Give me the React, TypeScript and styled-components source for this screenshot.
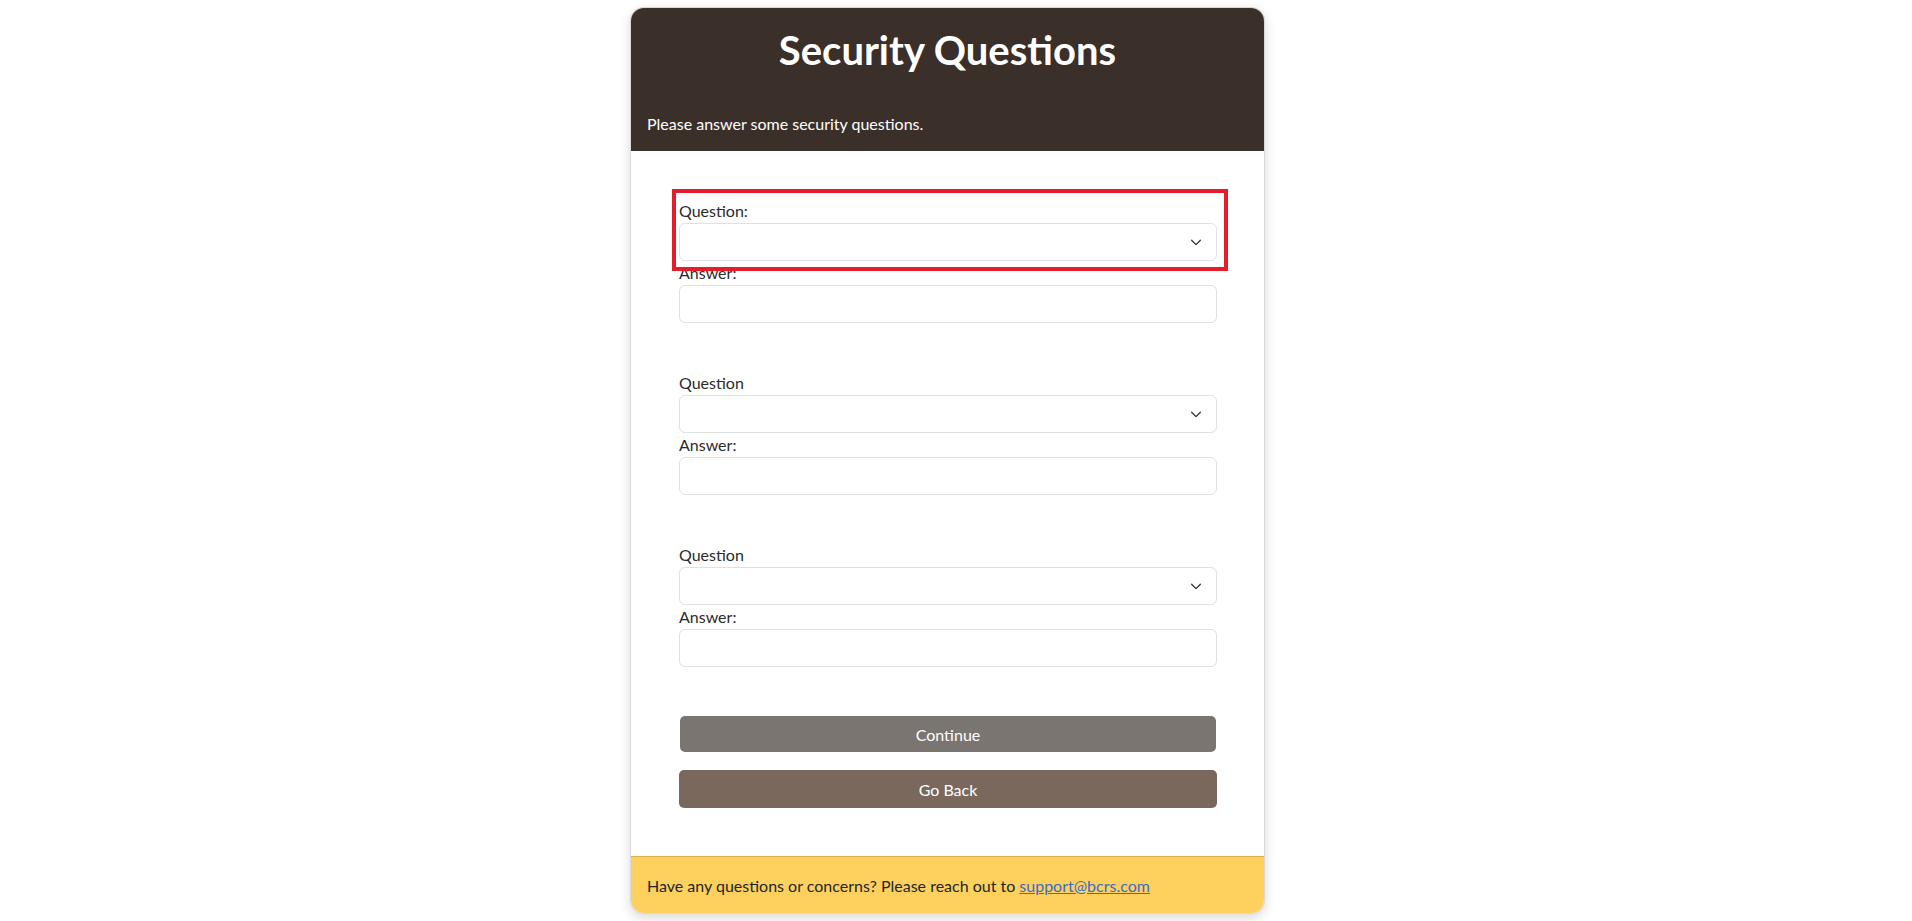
import React from 'react';
import styled, { createGlobalStyle } from 'styled-components';

const GlobalStyle = createGlobalStyle`
  html, body {
    margin: 0;
    padding: 0;
    background: #ffffff;
  }
  body {
    font-family: Lato, "Noto Sans", "Liberation Sans", sans-serif;
    font-size: 16px;
    color: #212529;
  }
  * {
    box-sizing: border-box;
  }
`;

// right padding stands in for the browser scrollbar seen in the reference
const Page = styled.div`
  display: flex;
  justify-content: center;
  padding: 7px 17px 78px 0;
`;

const Card = styled.div`
  width: 635px;
  background: #ffffff;
  border: 1px solid rgba(0, 0, 0, 0.15);
  border-radius: 14px;
  overflow: hidden;
  box-shadow: 0 4px 12px rgba(0, 0, 0, 0.15);
  display: flex;
  flex-direction: column;
`;

const Header = styled.div`
  background: #3b2f2a;
  color: #ffffff;
  padding: 18px 16px 15px;
  display: flex;
  flex-direction: column;
  gap: 38px;
`;

const Title = styled.h1`
  margin: 0;
  text-align: center;
  font-size: 40px;
  font-weight: 700;
  line-height: 48px;
`;

const Subtitle = styled.p`
  margin: 0;
  font-size: 16px;
  line-height: 24px;
`;

const Body = styled.form`
  padding: 48px 47px 48px 48px;
  display: flex;
  flex-direction: column;
  gap: 48px;
`;

const Group = styled.div`
  display: flex;
  flex-direction: column;
`;

const Field = styled.div<{ $highlight?: boolean }>`
  position: relative;
  display: flex;
  flex-direction: column;

  ${({ $highlight }) =>
    $highlight &&
    `
    &::after {
      content: '';
      position: absolute;
      top: -10px;
      bottom: -10px;
      left: -7px;
      right: -11px;
      border: 4px solid #e31e2a;
      pointer-events: none;
      z-index: 2;
    }
  `}
`;

const Label = styled.label`
  font-size: 16px;
  line-height: 24px;
  color: #2b2b2b;
`;

const Select = styled.div`
  position: relative;
  height: 38px;
  border: 1px solid #dee2e6;
  border-radius: 6px;
  background: #ffffff;
  display: flex;
  align-items: center;
  justify-content: flex-end;
  padding-right: 13px;
  color: #343a40;
`;

const Input = styled.input`
  height: 38px;
  width: 100%;
  border: 1px solid #dee2e6;
  border-radius: 6px;
  padding: 6px 12px;
  font: inherit;
  background: #ffffff;
  outline: none;
`;

const Buttons = styled.div`
  display: flex;
  flex-direction: column;
  gap: 18px;
  margin-top: 1px;
`;

const Button = styled.button<{ $tone: 'muted' | 'brown' }>`
  height: ${({ $tone }) => ($tone === 'muted' ? '36px' : '38px')};
  margin: ${({ $tone }) => ($tone === 'muted' ? '0 1px' : '0')};
  border: none;
  border-radius: 5px;
  background: ${({ $tone }) => ($tone === 'muted' ? '#7b7572' : '#7b685d')};
  color: #ffffff;
  font-family: inherit;
  font-size: 16px;
  cursor: pointer;
`;

const Footer = styled.div`
  background: #fed15f;
  border-top: 1px solid #d9b24a;
  height: 57px;
  padding: 0 16px;
  display: flex;
  align-items: center;
  font-size: 16px;
  color: #212529;
`;

const Link = styled.a`
  color: #3b6bc6;
  text-decoration: underline;
  margin-left: 4px;
`;

const Chevron = () => (
  <svg width="14" height="14" viewBox="0 0 16 16" fill="none">
    <path d="m3 6 5 5 5-5" stroke="#343a40" strokeWidth="1.6" strokeLinecap="round" strokeLinejoin="round" />
  </svg>
);

const questions = [
  { label: 'Question:', highlight: true },
  { label: 'Question', highlight: false },
  { label: 'Question', highlight: false },
];

export default function App() {
  return (
    <>
      <GlobalStyle />
      <Page>
        <Card>
          <Header>
            <Title>Security Questions</Title>
            <Subtitle>Please answer some security questions.</Subtitle>
          </Header>
          <Body onSubmit={(e) => e.preventDefault()}>
            {questions.map((q, i) => (
              <Group key={i}>
                <Field $highlight={q.highlight}>
                  <Label>{q.label}</Label>
                  <Select>
                    <Chevron />
                  </Select>
                </Field>
                <Label>Answer:</Label>
                <Input type="text" />
              </Group>
            ))}
            <Buttons>
              <Button type="submit" $tone="muted">Continue</Button>
              <Button type="button" $tone="brown">Go Back</Button>
            </Buttons>
          </Body>
          <Footer>
            Have any questions or concerns? Please reach out to
            <Link href="#">support@bcrs.com</Link>
          </Footer>
        </Card>
      </Page>
    </>
  );
}
